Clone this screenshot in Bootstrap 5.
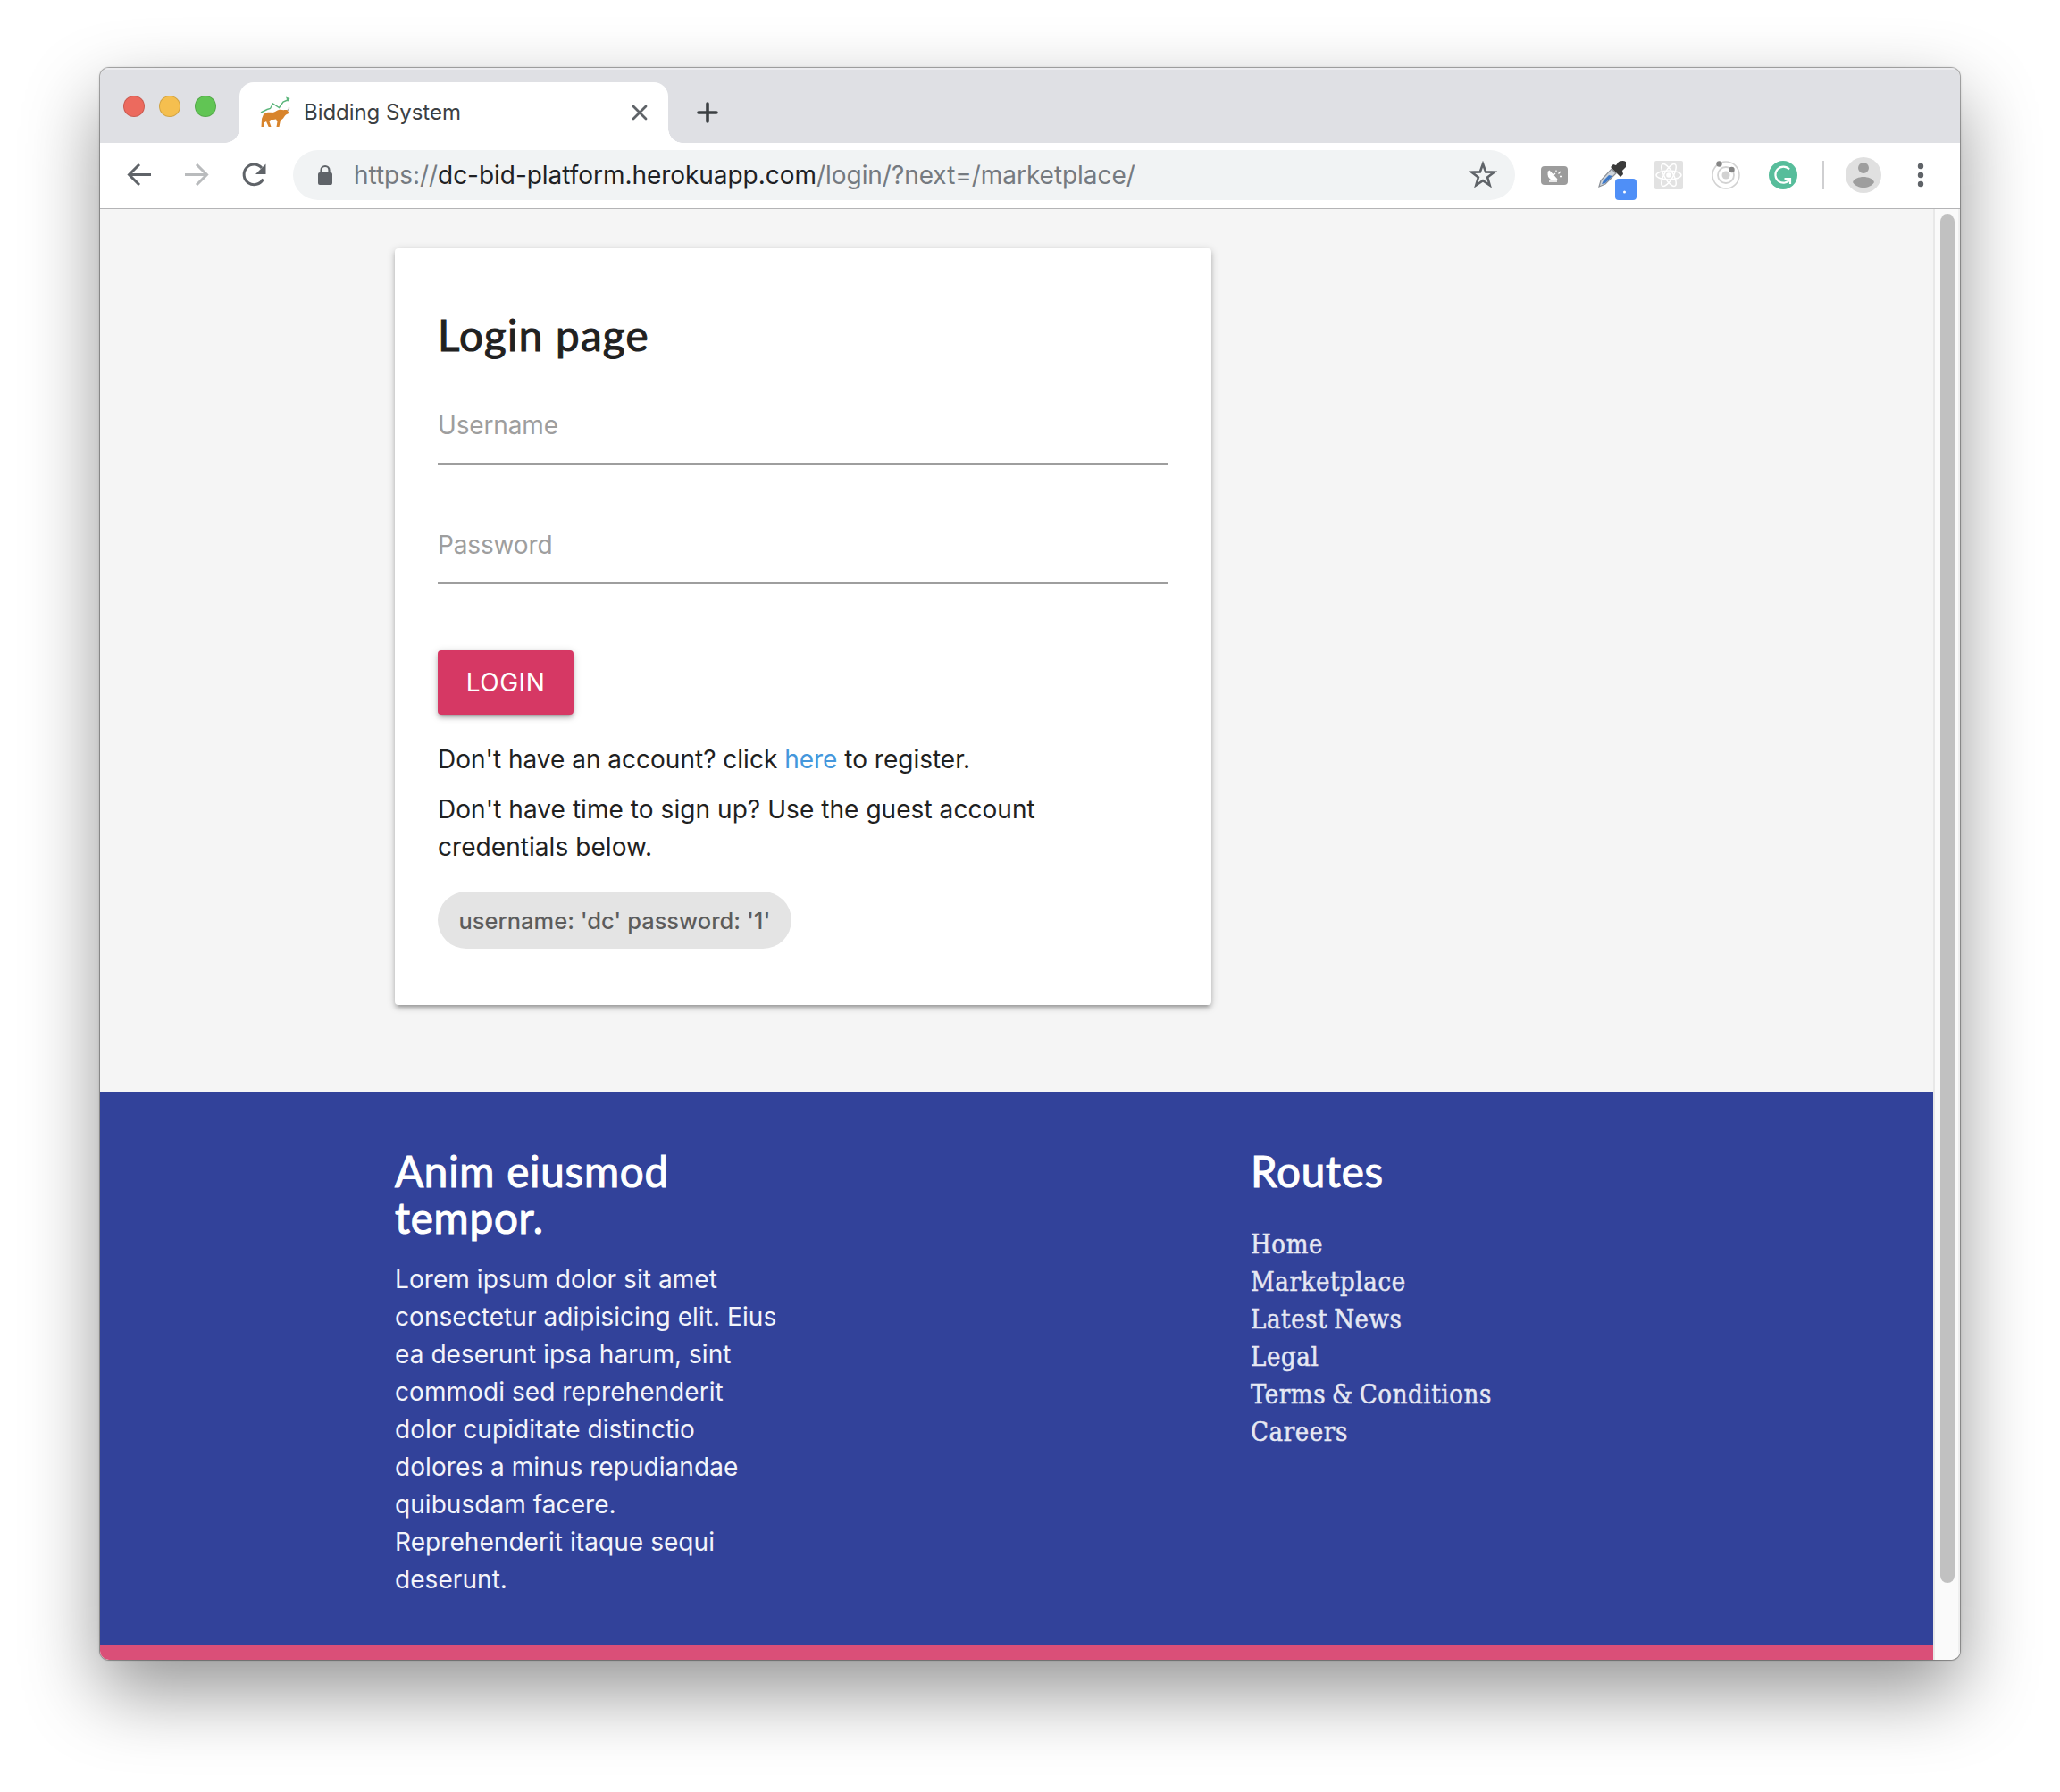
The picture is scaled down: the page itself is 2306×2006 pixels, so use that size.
<!DOCTYPE html>
<html lang="en">
<head>
<meta charset="utf-8">
<title>Bidding System</title>
<link href="https://cdn.jsdelivr.net/npm/bootstrap@5.3.0/dist/css/bootstrap.min.css" rel="stylesheet">
<style>
body{background:#fff;min-height:2006px;padding:76px 0 0 112px;font-family:Inter,"Liberation Sans",sans-serif;font-size:28px;line-height:42px;color:#212121}
.browser{width:2082px;height:1782px;border-radius:10px;box-shadow:0 0 0 1px rgba(0,0,0,.25),0 0 3px rgba(0,0,0,.3),0 36px 84px rgba(0,0,0,.42)}
.strip{height:84px;background:#dfe0e4;box-shadow:inset 0 2px 0 #ececef}
.lights{padding:31px 0 0 26px;gap:16px;width:156px}
.lights i{width:24px;height:24px;border-radius:50%;border:1px solid rgba(0,0,0,.14)}
.light-close{background:#ec6a5e}
.light-min{background:#f5bf4f}
.light-max{background:#61c554}
.tab-item{width:480px;height:68px;margin-top:16px;padding:0 20px 0 22px;background:#fff;border-radius:16px 16px 0 0;font-size:24px;letter-spacing:-.05px;color:#3c4043}
.tab-item::before,.tab-item::after{content:"";position:absolute;bottom:0;width:16px;height:16px;background:radial-gradient(circle at 0 0,transparent 15.5px,#fff 16px)}
.tab-item::before{left:-16px}
.tab-item::after{right:-16px;background:radial-gradient(circle at 100% 0,transparent 15.5px,#fff 16px)}
.tab-title{margin-left:14px}
.plus{margin:38px 0 0 32px}
.toolbar{height:74px;padding-bottom:1px;border-bottom:1px solid #b4b4b6;background:#fff}
.omni{width:1368px;height:56px;border-radius:28px;background:#f1f3f4;padding:0 20px 0 27px;color:#757a80}
.url{margin-left:23px;letter-spacing:-.04px}
.addr{color:#202124}
.page{background:#f5f5f5;width:2052px}
.login-card{width:914px;height:847px;margin:44px 0 0 330px;padding:71px 48px 0;border:0;border-radius:4px;box-shadow:0 4px 4px 0 rgba(0,0,0,.14),0 6px 2px -4px rgba(0,0,0,.12),0 2px 10px 0 rgba(0,0,0,.2)}
.head{font-family:Lato,"Liberation Sans",sans-serif;font-size:47.5px;line-height:52px;font-weight:400;letter-spacing:.8px;-webkit-text-stroke:1.1px currentColor;stroke-linejoin:round;margin:0}
.login-card .head{letter-spacing:1.3px}
.field{height:88px;border:0;border-bottom:2px solid #9e9e9e;border-radius:0;padding:2px 0 0;font-size:28px;letter-spacing:-.15px;color:#212121;background:none}
.field-user{margin-top:31px}
.field-pass{margin-top:46px}
.field::placeholder{color:#9e9e9e;opacity:1}
.go{width:152px;height:72px;margin-top:74px;border:0;border-radius:4px;background:#d63864;color:#fff;font-size:28px;letter-spacing:.5px;box-shadow:0 4px 4px 0 rgba(0,0,0,.14),0 6px 2px -4px rgba(0,0,0,.12),0 2px 10px 0 rgba(0,0,0,.2)}
.register-note{margin:29px 0 14px}
.register-note a{color:#4497dc}
.guest-note{margin:0 0 29px;letter-spacing:.06px}
.chip{width:396px;height:64px;border-radius:32px;background:#e4e4e4;color:rgba(0,0,0,.6);font-size:25.5px;font-weight:500;padding-top:1px}
.foot{height:620px;background:#32429a;padding:63px 0 0 330px;color:#fff}
.foot-about{width:958px}
.lorem{margin-top:22px;color:#f3f4fa;white-space:nowrap;letter-spacing:.06px}
.routes{margin-top:35px;font-family:"DejaVu Serif",serif;font-stretch:condensed;font-size:29px;letter-spacing:.6px;word-spacing:-2px;-webkit-text-stroke:.5px currentColor;color:#e6e8f3}
.routes a{color:inherit}
.pinkbar{height:16px;background:#da4f78}
.rail{width:30px;background:#fafafa;border-left:2px solid #e8e8e8;border-right:2px solid #efefef;padding:6px 0 0 6px}
.thumb{width:16px;height:1532px;border-radius:8px;background:#c1c1c1}
</style>
</head>
<body>
<div class="browser overflow-hidden d-flex flex-column">
 <div class="strip d-flex">
  <div class="lights d-flex"><i class="light-close"></i><i class="light-min"></i><i class="light-max"></i></div>
  <div class="tab-item position-relative d-flex align-items-center">
   <svg width="36" height="36" viewBox="0 0 36 36"><path d="M2 18l7-3.500 3.500-1 3-5.500 7 4.500 4.500-6.500 6-2.500" fill="none" stroke="#5cb67c" stroke-width="1.400"/><path d="M30 .5l4.500 1.500-2.500 4z" fill="#5cb67c"/><path d="M5 20c3-2.500 6-2.500 10-2 3 0 4-2.500 7-3 3-.5 5 .5 7 0l2.500 0 1.500 2.500c.5 1.500-.5 2-2 2.500-1.500.5-2 1.500-3 3-1 2-2.500 3-4 3.500L22.500 34h-3l1-6-1.500-2.500c-2 .5-4 .5-6 .5L11.500 28l2 6h-2.800l-2.700-6L5.500 29.500l-.5 4.500H2.500l.5-9z" fill="#d8842c"/><path d="M31.500 15.500q2.500-.5 2-3.500" fill="none" stroke="#a9a39a" stroke-width="1.200"/></svg>
   <span class="tab-title">Bidding System</span>
   <svg class="ms-auto" width="24" height="24" viewBox="0 0 24 24" stroke="#5f6368" stroke-width="2.800" stroke-linecap="round"><path d="M5 5l14 14M19 5L5 19"/></svg>
  </div>
  <svg class="plus" width="24" height="24" viewBox="0 0 24 24" stroke="#3c4043" stroke-width="3.600" stroke-linecap="round"><path d="M12 2v20M2 12h20"/></svg>
 </div>
 <div class="toolbar d-flex align-items-center">
  <svg width="216" height="72" viewBox="0 0 216 72" fill="none" stroke="#5f6368" stroke-width="3" class="flex-shrink-0"><path d="M57 35.500H33M44 24L32.500 35.500 44 47"/><path stroke="#b9bbbd" d="M95 35.500h24M108 24l11.500 11.500L108 47"/><path d="M182.500 40.500A11.300 11.300 0 1 1 181 28"/><path d="M185.500 23.500v11.500h-11.500z" fill="#5f6368" stroke="none"/></svg>
  <div class="omni d-flex align-items-center">
   <svg width="18" height="24" viewBox="0 0 18 24"><rect x="1" y="9" width="16" height="14" rx="2" fill="#5f6368"/><path d="M4.500 10V6.500a4.500 4.500 0 0 1 9 0V10" fill="none" stroke="#5f6368" stroke-width="2.200"/></svg>
   <span class="url">https://<span class="addr">dc-bid-platform.herokuapp.com</span>/login/?next=/marketplace/</span>
   <svg class="ms-auto" width="32" height="32" viewBox="0 0 32 32"><path d="M16 3.500l3.200 8.900 9.300.3-7.400 5.700 2.600 9.100-7.700-5.300-7.700 5.300 2.600-9.100-7.400-5.700 9.300-.3z" fill="none" stroke="#5f6368" stroke-width="2.600"/></svg>
  </div>
  <svg width="498" height="72" viewBox="1696 160 498 72" class="flex-shrink-0">
   <rect x="1725" y="186" width="30" height="21" rx="4" fill="#9c9c9c"/><path d="M1733 191c-2 7 2 12 10 11-2-4-6-8-10-11z" fill="#fff"/><path d="M1734 191l9 10M1738 197l3-3M1742 190.500v2.500M1747 192l-2.500 2.500M1748.500 197.500h-2.500M1734 203h9" fill="none" stroke="#fff" stroke-width="1.300"/>
   <path d="M1790 209l2-7 12-13 5 5-12 12z" fill="#cfd5dc" stroke="#8a8f96" stroke-width="1.200"/><path d="M1793 206l2-4 6-6 4 1-8 8z" fill="#3c78c8"/><path d="M1803 187l3-3 3 1 3-4q5-2 8 0v6l-4 4 1 4-3 3z" fill="#3a3a3a"/><rect x="1808" y="200" width="24" height="24" rx="4" fill="#4f8ff7"/><circle cx="1818.500" cy="215" r="1.500" fill="#fff"/>
   <rect x="1852" y="180" width="32" height="32" rx="2" fill="#e2e2e2"/><g fill="none" stroke="#fff" stroke-width="1.500"><ellipse cx="1868" cy="196" rx="14" ry="5"/><ellipse cx="1868" cy="196" rx="14" ry="5" transform="rotate(60 1868 196)"/><ellipse cx="1868" cy="196" rx="14" ry="5" transform="rotate(120 1868 196)"/></g><circle cx="1868" cy="196" r="2.800" fill="#fff"/>
   <g fill="none" stroke="#d2d2d2"><circle cx="1932" cy="196" r="15" stroke-width="1.500"/><circle cx="1932" cy="196" r="9" stroke-width="1.800"/></g><circle cx="1932" cy="196" r="4.500" fill="#d2d2d2"/><circle cx="1924.500" cy="183.500" r="3.200" fill="#858585"/><circle cx="1938.500" cy="190" r="3.200" fill="#858585"/>
   <circle cx="1996" cy="196" r="16" fill="#57bd9b"/><path d="M2003 189.500a9 9 0 1 0 1 11M1997.500 200h6.500v6" fill="none" stroke="#fff" stroke-width="2.200"/>
   <path d="M2041 180v32" stroke="#cfcfd1" stroke-width="2"/>
   <circle cx="2086" cy="196" r="20" fill="#e0e0e0"/><circle cx="2086" cy="188" r="6" fill="#9e9e9e"/><path d="M2074 204c3-8 21-8 24 0-5 8-19 8-24 0z" fill="#9e9e9e"/>
   <g fill="#5f6368"><circle cx="2150" cy="186" r="3.200"/><circle cx="2150" cy="196" r="3.200"/><circle cx="2150" cy="206" r="3.200"/></g>
  </svg>
 </div>
 <div class="d-flex flex-fill">
  <div class="page d-flex flex-column justify-content-between">
   <main>
    <form class="login-card card">
     <h1 class="head">Login page</h1>
     <input class="field field-user form-control" placeholder="Username">
     <input class="field field-pass form-control" type="password" placeholder="Password">
     <button type="button" class="go btn p-0">LOGIN</button>
     <p class="register-note">Don't have an account? click <a href="#" class="text-decoration-none">here</a> to register.</p>
     <p class="guest-note">Don't have time to sign up? Use the guest account<br>credentials below.</p>
     <div class="chip d-flex align-items-center justify-content-center">username: 'dc' password: '1'</div>
    </form>
   </main>
   <div>
    <footer class="foot d-flex align-items-start">
     <div class="foot-about">
      <h2 class="head">Anim eiusmod<br>tempor.</h2>
      <p class="lorem mb-0">Lorem ipsum dolor sit amet<br>consectetur adipisicing elit. Eius<br>ea deserunt ipsa harum, sint<br>commodi sed reprehenderit<br>dolor cupiditate distinctio<br>dolores a minus repudiandae<br>quibusdam facere.<br>Reprehenderit itaque sequi<br>deserunt.</p>
     </div>
     <div>
      <h2 class="head">Routes</h2>
      <ul class="routes list-unstyled"><li><a class="text-decoration-none" href="#">Home</a></li><li><a class="text-decoration-none" href="#">Marketplace</a></li><li><a class="text-decoration-none" href="#">Latest News</a></li><li><a class="text-decoration-none" href="#">Legal</a></li><li><a class="text-decoration-none" href="#">Terms &amp; Conditions</a></li><li><a class="text-decoration-none" href="#">Careers</a></li></ul>
     </div>
    </footer>
    <div class="pinkbar"></div>
   </div>
  </div>
  <div class="rail"><div class="thumb"></div></div>
 </div>
</div>
<script src="https://cdn.jsdelivr.net/npm/bootstrap@5.3.0/dist/js/bootstrap.bundle.min.js"></script>
</body>
</html>
